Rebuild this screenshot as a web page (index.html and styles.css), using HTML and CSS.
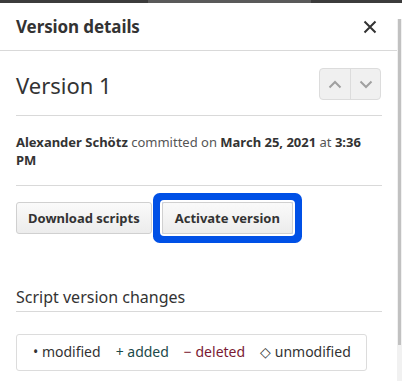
FILE: index.html
```html
<!DOCTYPE html>
<html lang="en">
<head>
    <meta charset="UTF-8">
    <title>Version details</title>
    <link rel="stylesheet" href="styles.css">
</head>
<body>
<div class="topbar">
    <span class="topbar__dark"></span>
    <span class="topbar__tab"></span>
    <span class="topbar__dark topbar__dark--fill"></span>
</div>
<div class="page">
    <aside class="panel">
        <header class="panel__header">
            <h1 class="panel__title">Version details</h1>
            <button class="panel__close" aria-label="Close">
                <svg width="14" height="14" viewBox="0 0 14 14">
                    <path d="M1.5 1.5 L12.5 12.5 M12.5 1.5 L1.5 12.5" stroke="#333" stroke-width="2" fill="none"/>
                </svg>
            </button>
        </header>

        <div class="panel__body">
            <div class="version">
                <h2 class="version__name">Version 1</h2>
                <div class="version__nav">
                    <button class="version__step" aria-label="Previous">
                        <svg width="14" height="9" viewBox="0 0 14 9">
                            <path d="M1.5 7.5 L7 2 L12.5 7.5" stroke="#a0a0a0" stroke-width="2" fill="none"/>
                        </svg>
                    </button>
                    <button class="version__step" aria-label="Next">
                        <svg width="14" height="9" viewBox="0 0 14 9">
                            <path d="M1.5 1.5 L7 7 L12.5 1.5" stroke="#a0a0a0" stroke-width="2" fill="none"/>
                        </svg>
                    </button>
                </div>
            </div>

            <p class="meta"><strong>Alexander Schötz</strong> committed on <strong>March 25, 2021</strong> at <strong>3:36 PM</strong></p>

            <div class="actions">
                <button class="btn">Download scripts</button>
                <button class="btn btn--focus">Activate version</button>
            </div>

            <h3 class="changes__title">Script version changes</h3>
            <ul class="legend">
                <li class="legend__item">&bull; modified</li>
                <li class="legend__item legend__item--added">+ added</li>
                <li class="legend__item legend__item--deleted">&minus; deleted</li>
                <li class="legend__item">&#9671; unmodified</li>
            </ul>
        </div>
    </aside>
    <div class="scrollbar">
        <div class="scrollbar__thumb"></div>
    </div>
</div>
</body>
</html>
```

FILE: styles.css
```css
* {
    margin: 0;
    padding: 0;
    box-sizing: border-box;
}

body {
    background: #fff;
    font-family: "Noto Sans", "Open Sans", sans-serif;
    color: #333;
    overflow: hidden;
}

button {
    font-family: inherit;
    cursor: pointer;
}

/* strip of the window above the panel */
.topbar {
    display: flex;
    height: 3px;
}

.topbar__dark {
    width: 148px;
    background: #3c3c3c;
}

.topbar__dark--fill {
    flex: 1;
}

.topbar__tab {
    width: 163px;
    background: #5a5a5a;
}

.page {
    display: flex;
    height: 378px;
}

.panel {
    flex: 1;
}

.panel__header {
    display: flex;
    align-items: center;
    justify-content: space-between;
    height: 48px;
    padding: 0 20px 0 16px;
    border-bottom: 1px solid #d9d9d9;
}

.panel__title {
    font-size: 17px;
    font-weight: 700;
    color: #333;
    letter-spacing: -0.1px;
}

.panel__close {
    display: flex;
    border: none;
    background: transparent;
    margin-top: 1px;
}

.panel__body {
    padding: 0 15px 0 16px;
}

.version {
    display: flex;
    align-items: center;
    justify-content: space-between;
    height: 65px;
    border-bottom: 1px solid #d9d9d9;
}

.version__name {
    font-size: 22px;
    font-weight: 400;
    color: #333;
    margin-top: 4px;
}

.version__nav {
    display: flex;
    margin: 2px 1px 0 0;
    border: 1px solid #dcdcdc;
    border-radius: 4px;
    background: #f0f0f0;
    overflow: hidden;
}

.version__step {
    display: flex;
    align-items: center;
    justify-content: center;
    width: 30px;
    height: 30px;
    border: none;
    background: transparent;
}

.version__step + .version__step {
    border-left: 1px solid #dcdcdc;
}

.meta {
    padding: 17px 0 16px;
    font-size: 13px;
    line-height: 18px;
    color: #555;
    border-bottom: 1px solid #d9d9d9;
}

.meta strong {
    font-weight: 700;
    color: #333;
}

.actions {
    display: flex;
    gap: 10px;
    margin-top: 16px;
}

.btn {
    height: 32px;
    padding: 0 11px;
    font-size: 13px;
    font-weight: 700;
    color: #333;
    background: linear-gradient(#fafafa, #ececec);
    border: 1px solid #d0d0d0;
    border-radius: 3px;
}

.btn--focus {
    padding: 0 12px;
    box-shadow: 0 0 0 2px #fff, 0 0 0 9px #0050e6;
    border-radius: 2px;
}

.changes__title {
    margin-top: 52px;
    padding-bottom: 3px;
    font-size: 16px;
    line-height: 22px;
    font-weight: 400;
    color: #333;
    border-bottom: 1px solid #d9d9d9;
}

.legend {
    display: flex;
    gap: 15px;
    list-style: none;
    width: 351px;
    margin-top: 22px;
    padding: 8px 12px 9px 16px;
    font-size: 14px;
    line-height: 18px;
    border: 1px solid #dcdcdc;
    border-radius: 3px;
}

.legend__item {
    white-space: nowrap;
}

.legend__item--added {
    color: #1c4a4a;
}

.legend__item--deleted {
    color: #7a1a33;
}

.scrollbar {
    width: 5px;
    margin-top: 16px;
    background: #f1f1f1;
}

.scrollbar__thumb {
    width: 3px;
    height: 326px;
    margin-left: 1px;
    background: #c1c1c1;
}
```
